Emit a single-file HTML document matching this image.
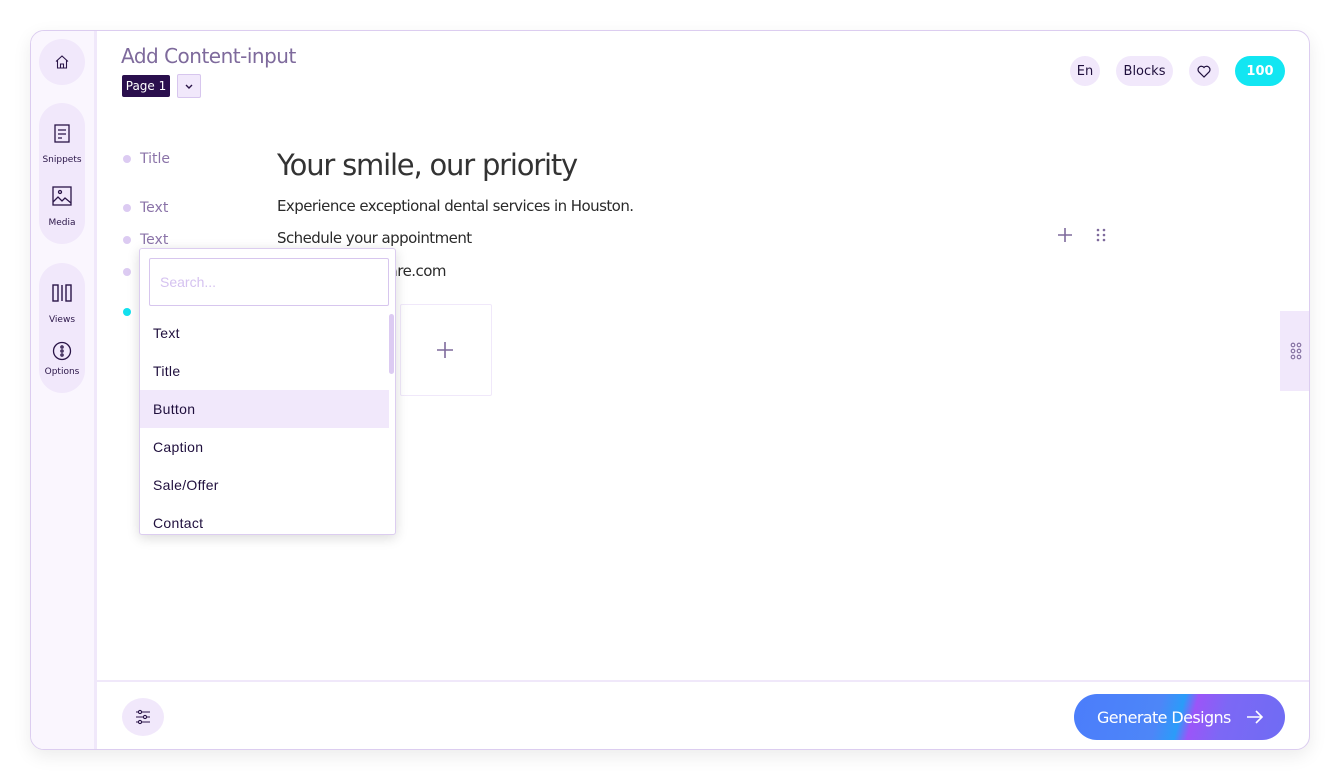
<!DOCTYPE html>
<html><head><style>
*{box-sizing:border-box;margin:0;padding:0}
body{width:1340px;height:780px;background:#fff;font-family:"Liberation Sans",sans-serif;position:relative;overflow:hidden}
.frame{position:absolute;left:30px;top:30px;width:1280px;height:720px;border:1px solid #dccdf0;border-radius:14px;box-shadow:0 6px 18px rgba(0,0,0,.08);overflow:hidden;background:#fff}
.side{position:absolute;left:0;top:0;width:66px;height:720px;background:#faf6fe;border-right:3px solid #f0e8fa}
.pill{position:absolute;left:8px;width:46px;background:#f1e8fb;border-radius:23px}
.lbl{position:absolute;width:46px;text-align:center;font-size:9px;color:#2a1548;font-family:"DejaVu Sans",sans-serif}
.abs{position:absolute}
.chip{position:absolute;top:25px;height:30px;border-radius:15px;background:#f1e8fb;color:#1f0f3d;font-size:13px;display:flex;align-items:center;justify-content:center;font-family:"DejaVu Sans",sans-serif}
.dot{position:absolute;left:92px;width:8px;height:8px;border-radius:50%;background:#dccbf2}
.nav{position:absolute;left:109px;font-size:14px;color:#8a73a8;font-family:"DejaVu Sans",sans-serif}
.dd{position:absolute;left:108px;top:217px;width:257px;height:287px;background:#fff;border:1px solid #dccdf0;border-radius:3px;box-shadow:0 3px 12px rgba(0,0,0,.15);overflow:hidden}
.it{position:absolute;left:0;width:249px;height:38px;padding-left:13px;line-height:38px;font-size:14px;color:#1f0f3d;letter-spacing:.3px}
.ct{position:absolute;left:246px;font-size:15px;color:#2a2a2a;font-family:'DejaVu Sans',sans-serif;letter-spacing:-.55px}
</style></head><body>
<div class="frame">
 <div class="side">
  <div class="pill" style="top:8px;height:46px"></div>
  <svg class="abs" style="left:23px;top:23px" width="16" height="16" viewBox="0 0 16 16" fill="none" stroke="#2a1548" stroke-width="1.1"><path d="M2 7.5L8 2l6 5.5M3.5 6.5V14h9V6.5M6.5 14v-4h3v4"/></svg>
  <div class="pill" style="top:72px;height:141px"></div>
  <svg class="abs" style="left:22px;top:93px" width="18" height="20" viewBox="0 0 18 20" fill="none" stroke="#2a1548" stroke-width="1.3"><rect x="2" y="1" width="14" height="17"/><path d="M5 6h8M5 10h8M5 14h4"/></svg>
  <div class="lbl" style="left:8px;top:124px">Snippets</div>
  <svg class="abs" style="left:21px;top:155px" width="20" height="20" viewBox="0 0 20 20" fill="none" stroke="#2a1548" stroke-width="1.3"><rect x="1" y="1" width="18" height="18"/><circle cx="8" cy="6" r="1.5"/><path d="M1 16l5-5 4 4 3-3 6 5"/></svg>
  <div class="lbl" style="left:8px;top:187px">Media</div>
  <div class="pill" style="top:232px;height:130px"></div>
  <svg class="abs" style="left:21px;top:253px" width="20" height="18" viewBox="0 0 20 18" fill="none" stroke="#2a1548" stroke-width="1.4"><rect x="1" y="1" width="5" height="16"/><path d="M10 1v16"/><rect x="14" y="1" width="5" height="16"/></svg>
  <div class="lbl" style="left:8px;top:284px">Views</div>
  <svg class="abs" style="left:21px;top:310px" width="20" height="20" viewBox="0 0 20 20" fill="none" stroke="#2a1548" stroke-width="1.3"><circle cx="10" cy="10" r="8.5"/><circle cx="10" cy="6" r="1.1"/><circle cx="10" cy="10" r="1.1"/><circle cx="10" cy="14" r="1.1"/></svg>
  <div class="lbl" style="left:8px;top:336px">Options</div>
 </div>
 <div class="abs" style="left:90px;top:13px;font-size:20px;color:#7e6a9c;font-family:'DejaVu Sans',sans-serif;letter-spacing:-.5px">Add Content-input</div>
 <div class="abs" style="left:91px;top:44px;width:48px;height:22px;background:#2a0f4d;border-radius:2px;color:#fff;font-size:12px;line-height:22px;text-align:center;font-family:'DejaVu Sans',sans-serif">Page 1</div>
 <div class="abs" style="left:146px;top:43px;width:24px;height:24px;background:#f1e8fb;border:1px solid #d7c6ee;border-radius:2px"><svg width="22" height="22" viewBox="0 0 22 22" fill="none" stroke="#2a1548" stroke-width="1.4"><path d="M8 10l3 3 3-3"/></svg></div>
 <div class="chip" style="left:1039px;width:30px">En</div>
 <div class="chip" style="left:1085px;width:57px">Blocks</div>
 <div class="chip" style="left:1158px;width:30px"><svg width="14" height="13" viewBox="0 0 14 13" fill="none" stroke="#1f0f3d" stroke-width="1.2"><path d="M7 12L1.8 6.8A3 3 0 0 1 7 2.5a3 3 0 0 1 5.2 4.3z"/></svg></div>
 <div class="chip" style="left:1204px;width:50px;background:#12e6f2;color:#fff;font-weight:bold">100</div>
 <div class="dot" style="top:124px"></div><div class="nav" style="top:120px">Title</div>
 <div class="dot" style="top:173px"></div><div class="nav" style="top:169px">Text</div>
 <div class="dot" style="top:205px"></div><div class="nav" style="top:201px">Text</div>
 <div class="dot" style="top:237px"></div>
 <div class="dot" style="top:277px;background:#12e0ee"></div>
 <div class="abs" style="left:246px;top:117px;font-size:29px;color:#333;font-family:'DejaVu Sans',sans-serif;letter-spacing:-1.2px">Your smile, our priority</div>
 <div class="ct" style="top:166px">Experience exceptional dental services in Houston.</div>
 <div class="ct" style="top:198px">Schedule your appointment</div>
 <div class="ct" style="top:231px">contact@smilecare.com</div>
 <div class="abs" style="left:369px;top:273px;width:92px;height:92px;border:1px solid #f0e8fa;border-radius:2px"></div>
 <svg class="abs" style="left:405px;top:310px" width="18" height="18" viewBox="0 0 18 18" stroke="#7e6a9c" stroke-width="1.6"><path d="M9 1v16M1 9h16"/></svg>
 <svg class="abs" style="left:1026px;top:196px" width="16" height="16" viewBox="0 0 16 16" stroke="#7e6a9c" stroke-width="1.6"><path d="M8 1v14M1 8h14"/></svg>
 <svg class="abs" style="left:1065px;top:197px" width="10" height="14" fill="#7e6a9c"><circle cx="2" cy="2" r="1.3"/><circle cx="8" cy="2" r="1.3"/><circle cx="2" cy="7" r="1.3"/><circle cx="8" cy="7" r="1.3"/><circle cx="2" cy="12" r="1.3"/><circle cx="8" cy="12" r="1.3"/></svg>
 <div class="abs" style="left:1249px;top:280px;width:30px;height:80px;background:#f1e8fb"><svg style="position:absolute;left:10px;top:31px" width="12" height="18" fill="none" stroke="#7e6a9c" stroke-width="1.1"><circle cx="3" cy="3" r="1.8"/><circle cx="9" cy="3" r="1.8"/><circle cx="3" cy="9" r="1.8"/><circle cx="9" cy="9" r="1.8"/><circle cx="3" cy="15" r="1.8"/><circle cx="9" cy="15" r="1.8"/></svg></div>
 <div class="abs" style="left:66px;top:649px;width:1214px;height:2px;background:#f0e8fa"></div>
 <div class="abs" style="left:91px;top:667px;width:42px;height:38px;border-radius:50%;background:#f1e8fb"><svg style="position:absolute;left:13px;top:11px" width="16" height="16" viewBox="0 0 16 16" fill="none" stroke="#2a1548" stroke-width="1.1"><path d="M1 3h14M1 8h14M1 13h14"/><circle cx="5" cy="3" r="1.6" fill="#f1e8fb"/><circle cx="10" cy="8" r="1.6" fill="#f1e8fb"/><circle cx="5" cy="13" r="1.6" fill="#f1e8fb"/></svg></div>
 <div class="abs" style="left:1043px;top:663px;width:211px;height:46px;border-radius:23px;background:linear-gradient(105deg,#4b7dfb 0%,#4d86f8 40%,#2a9cf9 50%,#9b55f8 56%,#7c68f5 70%,#6f6cf4 100%);color:#fff;font-size:16px;font-family:'DejaVu Sans',sans-serif;display:flex;align-items:center;padding-left:23px;letter-spacing:-.6px">Generate Designs<svg style="margin-left:15px" width="18" height="14" viewBox="0 0 18 14" fill="none" stroke="#fff" stroke-width="1.6"><path d="M1 7h15M10 1l6 6-6 6"/></svg></div>
 <div class="dd">
  <div class="abs" style="left:9px;top:9px;width:240px;height:48px;border:1px solid #d7c6ee;border-radius:2px;font-size:14px;color:#d5c2f0;padding:15px 0 0 10px">Search...</div>
  <div class="it" style="top:65px">Text</div>
  <div class="it" style="top:103px">Title</div>
  <div class="it" style="top:141px;background:#f1e8fb">Button</div>
  <div class="it" style="top:179px">Caption</div>
  <div class="it" style="top:217px">Sale/Offer</div>
  <div class="it" style="top:255px">Contact</div>
  <div class="abs" style="left:249px;top:65px;width:5px;height:60px;border-radius:3px;background:#dccbf2"></div>
 </div>
</div>
</body></html>
